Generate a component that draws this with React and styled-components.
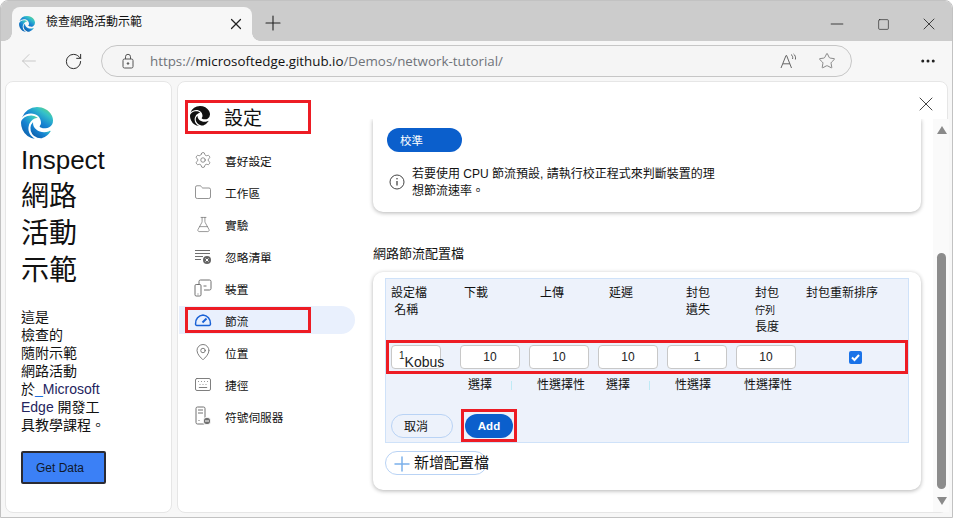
import React from 'react';
import styled, { createGlobalStyle } from 'styled-components';
import { ArrowLeft, RotateCw, X, Plus, Minus, Square, Star, MoreHorizontal, Settings, Folder, FlaskConical, MapPin, Keyboard } from 'lucide-react';
import { BsBrowserEdge } from 'react-icons/bs';

const SANS = '"Liberation Sans", "Noto Sans CJK TC", sans-serif';
const RED = '#ed1c24';

const Global = createGlobalStyle`
html, body { margin: 0; padding: 0; background: #fff; }
*, *::before, *::after { box-sizing: border-box; }
body { font-family: ${SANS}; color: #111; }
`

// window chrome
const Win = styled.div`
width: 953px;
height: 518px;
display: flex;
flex-direction: column;
background: #f7f7f7;
border: 1px solid #c2c2c2;
border-radius: 8px 8px 0 0;
overflow: hidden;
`

const TabStrip = styled.div`
height: 40px;
flex: none;
display: flex;
align-items: flex-end;
background: #cccccc;
padding-left: 11px;
`

const Tab = styled.div`
position: relative;
width: 240px;
height: 34px;
display: flex;
align-items: center;
background: #f7f7f7;
border-radius: 8px 8px 0 0;
padding: 0 4px 0 7px;
&::before, &::after {
  content: "";
  position: absolute;
  bottom: 0;
  width: 8px;
  height: 8px;
}
&::before {
  left: -8px;
  background: radial-gradient(circle at 0 0, transparent 7.5px, #f7f7f7 8px);
}
&::after {
  right: -8px;
  background: radial-gradient(circle at 100% 0, transparent 7.5px, #f7f7f7 8px);
}
`

const TabTitle = styled.span`
font-size: 12px;
margin-left: 11px;
flex: 1;
position: relative;
top: -4px;
`

const IconBtn = styled.span`
display: flex;
align-items: center;
justify-content: center;
width: ${p => p.$w || 24}px;
color: ${p => p.$color || '#222'};
flex: none;
margin: ${p => p.$m || 0};
`

const NewTab = styled(IconBtn)`
margin-left: 9px;
margin-bottom: 6px;
`

const WinControls = styled.div`
margin-left: auto;
display: flex;
margin-bottom: 7px;
margin-right: 11px;
gap: 22px;
`

const Toolbar = styled.div`
height: 40px;
flex: none;
display: flex;
align-items: center;
padding-left: 16px;
`

const AddressBar = styled.div`
width: 751px;
height: 32px;
margin-left: 6px;
display: flex;
align-items: center;
border: 1px solid #c6c6c6;
border-radius: 16px;
background: #f5f5f5;
padding-left: 19px;
`

const Url = styled.span`
font-family: "Open Sans", sans-serif;
font-size: 13.35px;
color: #6f7379;
margin-left: 15px;
flex: 1;
b { font-weight: 400; color: #111; }
`

const Panes = styled.div`
flex: 1;
display: flex;
gap: 5px;
padding: 0 4px 4px 4px;
min-height: 0;
`

const Pane = styled.div`
background: #fff;
border: 1px solid #e6e6e6;
border-radius: 8px;
`

// left demo page
const DemoPane = styled(Pane)`
width: 167px;
padding: 25px 0 0 15px;
`

const Title = styled.h1`
font-size: 28px;
font-weight: 400;
line-height: 37px;
margin: 1px 0 0;
span { font-size: 26px; position: relative; top: 1px; }
`

const Intro = styled.p`
font-size: 14px;
line-height: 18px;
margin: 19px 0 17px;
white-space: nowrap;
a { color: #24245e; }
a i { color: #1f6fe0; font-style: normal; }
`

const GetData = styled.button`
display: block;
width: 85px;
height: 33px;
background: #3b80f6;
border: 2px solid #2b2b33;
border-radius: 2px;
font-family: ${SANS};
font-size: 12px;
color: #10182a;
text-align: left;
padding: 0 0 0 13px;
`

// settings
const SettingsPane = styled(Pane)`
flex: 1;
display: flex;
min-width: 0;
`

const Nav = styled.nav`
width: 195px;
flex: none;
padding: 18px 0 0 8px;
`

const NavHead = styled.div`
width: 126px;
height: 34px;
border: 3px solid ${RED};
margin-left: -1px;
display: flex;
align-items: center;
padding: 0 0 2px 2px;
margin-bottom: 12px;
font-size: 19px;
gap: 14px;
`

const NavItem = styled.div`
position: relative;
width: 176px;
height: 28px;
margin: 0 0 4px -7px;
display: flex;
align-items: center;
gap: 13px;
padding-left: 15px;
font-size: 11.7px;
background: ${p => p.$active ? '#e9f0fd' : 'transparent'};
border-radius: 0 14px 14px 0;
${p => p.$active && `
  &::after {
    content: "";
    position: absolute;
    left: 6px;
    top: 1px;
    width: 126px;
    height: 26px;
    border: 3px solid ${RED};
  }
`}
`

const NavIcon = styled.span`
width: 18px;
height: 18px;
display: flex;
align-items: center;
justify-content: center;
color: #707070;
`

const Main = styled.div`
flex: 1;
display: flex;
flex-direction: column;
min-width: 0;
`

const CloseRow = styled.div`
height: 37px;
flex: none;
display: flex;
justify-content: flex-end;
align-items: flex-end;
padding: 0 9px 3px 0;
color: #444;
`

const ScrollArea = styled.div`
flex: 1;
display: flex;
min-height: 0;
`

const Content = styled.div`
flex: 1;
padding-right: 12px;
`

const Scrollbar = styled.div`
width: 16px;
flex: none;
display: flex;
flex-direction: column;
align-items: center;
padding: 7px 0 0 1px;
background: #fafafa;
`

const Arrow = styled.div`
width: 0;
height: 0;
border-left: 5px solid transparent;
border-right: 5px solid transparent;
${p => p.$down ? 'border-top: 8px solid #8a8a8a;' : 'border-bottom: 8px solid #8a8a8a;'}
`

const Thumb = styled.div`
width: 9px;
height: 236px;
background: #8c8c8c;
border-radius: 5px;
margin: 119px 0 8px;
`

const Card = styled.div`
background: #fff;
border-radius: ${p => p.$open ? '0 0 10px 10px' : '10px'};
box-shadow: 0 1px 4px rgba(0,0,0,.3);
`

const CalibrateCard = styled(Card)`
height: 93px;
padding: 9px 14px 0;
clip-path: inset(0 -8px -8px -8px);
`

const PillBtn = styled.button`
display: block;
width: 75px;
height: 24px;
background: #0b5fcc;
border: none;
border-radius: 12px;
color: #fff;
font-family: ${SANS};
font-size: 11.5px;
text-align: left;
padding: 0 0 0 13px;
`

const Info = styled.div`
display: flex;
align-items: center;
gap: 7px;
margin: 14px 0 0 2px;
font-size: 12px;
line-height: 17px;
color: #111;
svg { position: relative; top: -1px; }
`

const Heading = styled.h2`
font-size: 13px;
font-weight: 400;
line-height: 18px;
margin: 33px 0 9px;
`

const ProfileCard = styled(Card)`
height: 218px;
padding: 6px 12px 0;
`

const Form = styled.div`
height: 165px;
background: #edf2fb;
border: 1px solid #cfe2f9;
padding-top: 6px;
`

const COLS = '60px 60px 60px 60px 60px 60px 100px';

const HeadRow = styled.div`
display: grid;
grid-template-columns: ${COLS};
column-gap: 9px;
padding-left: 5px;
height: 50px;
margin-bottom: 5px;
font-size: 12px;
line-height: 16.5px;
`

const HeadCell = styled.div`
padding-left: ${p => p.$pad || 0}px;
white-space: nowrap;
small { font-size: 10px; }
`

const InputRow = styled.div`
display: grid;
grid-template-columns: ${COLS};
column-gap: 9px;
align-items: center;
height: 34px;
border: 3px solid ${RED};
padding-left: 2px;
`

const Field = styled.div`
width: ${p => p.$w || 60}px;
height: 24px;
background: #fff;
border: 1px solid #c8c8c8;
border-radius: 4px;
display: flex;
align-items: center;
justify-content: center;
font-size: 12px;
color: #222;
`

const NameField = styled(Field)`
justify-content: flex-start;
padding-left: 7px;
white-space: nowrap;
font-size: 14px;
sup { font-size: 10px; line-height: 1; position: relative; top: -1px; vertical-align: top; }
span { position: relative; top: 5px; }
`

const CheckCell = styled.div`
display: flex;
justify-content: center;
`

const CheckBox = styled.div`
width: 13px;
height: 13px;
background: #1a73e8;
border-radius: 2px;
display: flex;
align-items: center;
justify-content: center;
`

const HintRow = styled.div`
display: grid;
grid-template-columns: ${COLS};
column-gap: 9px;
padding-left: 5px;
margin-top: 3px;
height: 17px;
font-size: 12px;
line-height: 17px;
white-space: nowrap;
`

const Hint = styled.div`
position: relative;
padding-left: ${p => p.$pad || 0}px;
${p => p.$tick && `
  &::after {
    content: "";
    position: absolute;
    right: 8px;
    top: 4px;
    width: 1px;
    height: 9px;
    background: #bfeaf5;
  }
`}
`

const Actions = styled.div`
display: flex;
align-items: center;
gap: 8px;
margin-top: 15px;
padding-left: 5px;
`

const CancelBtn = styled.button`
width: 62px;
height: 24px;
background: transparent;
border: 1px solid #b9d3f5;
border-radius: 12px;
font-family: ${SANS};
font-size: 12px;
color: #111;
text-align: left;
padding: 0 0 0 12px;
`

const AddBox = styled.div`
width: 56px;
height: 33px;
border: 3px solid ${RED};
padding-left: 1px;
display: flex;
align-items: center;
`

const AddBtn = styled.button`
width: 48px;
height: 24px;
background: #0b5fcc;
border: none;
border-radius: 12px;
color: #fff;
font-family: ${SANS};
font-weight: 700;
font-size: 11.5px;
padding: 0;
`

const NewProfile = styled.button`
display: flex;
align-items: center;
width: 102px;
height: 24px;
margin-top: 8px;
padding: 0 0 3px 4px;
background: #fff;
border: 1px solid #b9d3f5;
border-radius: 12px;
font-family: ${SANS};
font-size: 15px;
color: #111;
white-space: nowrap;
svg { position: relative; top: 2px; flex: none; }
`

function EdgeLogo({ size, id }) {
    return (
        <svg width={size} height={size} style={{ display: 'block' }}>
            <defs>
                <linearGradient id={id} x1="0" y1="1" x2="1" y2="0">
                    <stop offset="0" stopColor="#0b4f98" />
                    <stop offset="0.45" stopColor="#1683d2" />
                    <stop offset="0.72" stopColor="#35c1c9" />
                    <stop offset="1" stopColor="#7bdc5c" />
                </linearGradient>
            </defs>
            <BsBrowserEdge size={size} fill={`url(#${id})`} />
        </svg>
    )
}

const Lock = () => (
    <svg width="14" height="16" viewBox="0 0 14 16" fill="none" stroke="#555" strokeWidth="1">
        <rect x="2" y="6" width="10" height="9" rx="1.5" />
        <path d="M4.5 6V3.8a2.5 2.5 0 0 1 5 0V6" />
        <circle cx="7" cy="10.5" r="0.8" fill="#555" />
    </svg>
)

const ReadAloud = () => (
    <svg width="18" height="16" viewBox="0 0 18 16" fill="none" stroke="#666" strokeWidth="1">
        <path d="M1 15 6 2.5h.6L11.5 15M3 10.8h7" />
        <path d="M11 1.5c1.5 1 2 2.5 1.6 4.5M13.5 1c1.7 1.2 2.4 3.2 1.9 5.5" />
    </svg>
)

const ListX = () => (
    <svg width="18" height="18" viewBox="0 0 18 18" fill="none" stroke="#707070" strokeWidth="1">
        <path d="M1 3.5h15M1 6.5h15M1 9.5h8M1 12.5h6" />
        <circle cx="13" cy="13" r="4" fill="#666" stroke="none" />
        <path d="m11.5 11.5 3 3m0-3-3 3" stroke="#fff" />
    </svg>
)

const Devices = () => (
    <svg width="18" height="18" viewBox="0 0 18 18" fill="none" stroke="#707070" strokeWidth="1">
        <path d="M5 6V2.5A1.5 1.5 0 0 1 6.5 1h9A1.5 1.5 0 0 1 17 2.5v7a1.5 1.5 0 0 1-1.5 1.5H10" />
        <rect x="1" y="5.5" width="6" height="11.5" rx="1.2" />
        <path d="M9.5 7h3M3.5 15h1" />
    </svg>
)

const Gauge = () => (
    <svg width="18" height="14" viewBox="0 0 18 14" fill="none" stroke="#1a62d6" strokeWidth="1.5">
        <path d="M3 12.5h12a1.5 1.5 0 0 0 1.4-2A8 8 0 0 0 9 2a8 8 0 0 0-7.4 8.5 1.5 1.5 0 0 0 1.4 2Z" />
        <path d="m8.5 9.5 4-4" strokeWidth="2" />
    </svg>
)

const ProxyIcon = () => (
    <svg width="18" height="20" viewBox="0 0 18 20" fill="none" stroke="#707070" strokeWidth="1">
        <rect x="2" y="1" width="9" height="17" rx="1.5" />
        <path d="M4 4h5M4 7h5M4.5 14.5h1" />
        <circle cx="13" cy="15" r="3.8" fill="#707070" stroke="#fff" />
        <path d="M11 15h4" stroke="#fff" />
    </svg>
)

const InfoIcon = () => (
    <svg width="16" height="16" viewBox="0 0 16 16" fill="none" stroke="#444" strokeWidth="1">
        <circle cx="8" cy="8" r="7" />
        <path d="M8 7v4.5" strokeWidth="1.3" />
        <circle cx="8" cy="4.8" r="0.8" fill="#444" stroke="none" />
    </svg>
)

const navItems = [
    { label: '喜好設定', icon: <Settings size={18} strokeWidth={1} /> },
    { label: '工作區', icon: <Folder size={19} strokeWidth={1} /> },
    { label: '實驗', icon: <FlaskConical size={17} strokeWidth={1} /> },
    { label: '忽略清單', icon: <ListX /> },
    { label: '裝置', icon: <Devices /> },
    { label: '節流', icon: <Gauge />, active: true },
    { label: '位置', icon: <MapPin size={18} strokeWidth={1.2} /> },
    { label: '捷徑', icon: <Keyboard size={19} strokeWidth={1.2} /> },
    { label: '符號伺服器', icon: <ProxyIcon /> },
];

const values = ['10', '10', '10', '1', '10'];

function App() {
    return (
        <Win>
            <Global />
            <TabStrip>
                <Tab>
                    <EdgeLogo size={16} id="edgeTab" />
                    <TabTitle>檢查網路活動示範</TabTitle>
                    <IconBtn><X size={18} strokeWidth={1.6} /></IconBtn>
                </Tab>
                <NewTab><Plus size={24} strokeWidth={1.1} /></NewTab>
                <WinControls>
                    <IconBtn><Minus size={20} strokeWidth={1} /></IconBtn>
                    <IconBtn><Square size={13} strokeWidth={1.2} /></IconBtn>
                    <IconBtn><X size={20} strokeWidth={1} /></IconBtn>
                </WinControls>
            </TabStrip>
            <Toolbar>
                <IconBtn $color="#c4c4c4"><ArrowLeft size={22} strokeWidth={1} /></IconBtn>
                <IconBtn $w={44} $color="#222" $m="0 0 0 10px"><RotateCw size={19} strokeWidth={1.2} /></IconBtn>
                <AddressBar>
                    <Lock />
                    <Url>https://<b>microsoftedge.github.io</b>/Demos/network-tutorial/</Url>
                    <IconBtn $w={20}><ReadAloud /></IconBtn>
                    <IconBtn $w={24} $color="#666" $m="0 12px 0 16px"><Star size={18} strokeWidth={1} /></IconBtn>
                </AddressBar>
                <IconBtn $w={24} $m="0 0 0 64px"><MoreHorizontal size={18} strokeWidth={2} /></IconBtn>
            </Toolbar>
            <Panes>
                <DemoPane>
                    <EdgeLogo size={32} id="edgeFill" />
                    <Title><span>Inspect</span><br />網路<br />活動<br />示範</Title>
                    <Intro>
                        這是<br />檢查的<br />隨附示範<br />網路活動<br />
                        於<a><i>_</i>Microsoft<br />Edge</a> 開發工<br />具教學課程。
                    </Intro>
                    <GetData>Get Data</GetData>
                </DemoPane>
                <SettingsPane>
                    <Nav>
                        <NavHead>
                            <BsBrowserEdge size={20} color="#111" />
                            設定
                        </NavHead>
                        {navItems.map(item => (
                            <NavItem key={item.label} $active={item.active}>
                                <NavIcon>{item.icon}</NavIcon>
                                {item.label}
                            </NavItem>
                        ))}
                    </Nav>
                    <Main>
                        <CloseRow><X size={24} strokeWidth={1} /></CloseRow>
                        <ScrollArea>
                            <Content>
                                <CalibrateCard $open>
                                    <PillBtn>校準</PillBtn>
                                    <Info>
                                        <InfoIcon />
                                        <span>若要使用 CPU 節流預設, 請執行校正程式來判斷裝置的理<br />想節流速率。</span>
                                    </Info>
                                </CalibrateCard>
                                <Heading>網路節流配置檔</Heading>
                                <ProfileCard>
                                    <Form>
                                        <HeadRow>
                                            <HeadCell>設定檔<br />&nbsp;名稱</HeadCell>
                                            <HeadCell $pad={4}>下載</HeadCell>
                                            <HeadCell $pad={11}>上傳</HeadCell>
                                            <HeadCell $pad={11}>延遲</HeadCell>
                                            <HeadCell $pad={19}>封包<br />遺失</HeadCell>
                                            <HeadCell $pad={19}>封包<br /><small>佇列</small><br />長度</HeadCell>
                                            <HeadCell $pad={1}>封包重新排序</HeadCell>
                                        </HeadRow>
                                        <InputRow>
                                            <NameField $w={50}><sup>1</sup><span>Kobus</span></NameField>
                                            {values.map((v, i) => <Field key={i}>{v}</Field>)}
                                            <CheckCell>
                                                <CheckBox>
                                                    <svg width="11" height="11" viewBox="0 0 11 11" fill="none" stroke="#fff" strokeWidth="2"><path d="m2 5.5 2.5 2.5 4.5-5" /></svg>
                                                </CheckBox>
                                            </CheckCell>
                                        </InputRow>
                                        <HintRow>
                                            <div />
                                            <Hint $pad={8} $tick>選擇</Hint>
                                            <Hint $pad={8}>性選擇性</Hint>
                                            <Hint $pad={8} $tick>選擇</Hint>
                                            <Hint $pad={8}>性選擇</Hint>
                                            <Hint $pad={8}>性選擇性</Hint>
                                        </HintRow>
                                        <Actions>
                                            <CancelBtn>取消</CancelBtn>
                                            <AddBox><AddBtn>Add</AddBtn></AddBox>
                                        </Actions>
                                    </Form>
                                    <NewProfile>
                                        <Plus size={24} strokeWidth={1.5} color="#7bb0ea" />
                                        新增配置檔
                                    </NewProfile>
                                </ProfileCard>
                            </Content>
                            <Scrollbar>
                                <Arrow />
                                <Thumb />
                                <Arrow $down />
                            </Scrollbar>
                        </ScrollArea>
                    </Main>
                </SettingsPane>
            </Panes>
        </Win>
    )
}

export default App;
